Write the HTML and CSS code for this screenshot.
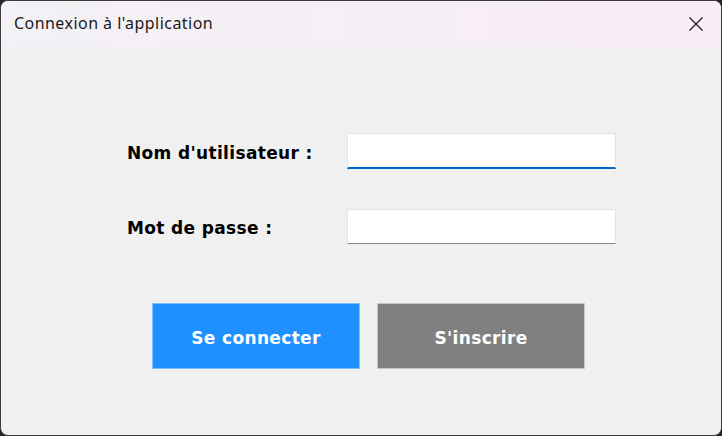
FILE: index.html
```html
<!DOCTYPE html>
<html lang="fr">
<head>
<meta charset="utf-8">
<title>Connexion à l'application</title>
<link rel="stylesheet" href="styles.css">
</head>
<body>
<div class="window">
  <div class="titlebar">
    <span class="title">Connexion à l'application</span>
    <button class="close" aria-label="Fermer">
      <svg width="16" height="16" viewBox="0 0 16 16"><path d="M1.5 1.5 L14.5 14.5 M14.5 1.5 L1.5 14.5" stroke="#1a1a1a" stroke-width="1.2" fill="none"/></svg>
    </button>
  </div>
  <div class="content">
    <div class="form">
      <label class="label" for="user">Nom d'utilisateur :</label>
      <div class="field focused"><input id="user" type="text"></div>
      <label class="label" for="pass">Mot de passe :</label>
      <div class="field"><input id="pass" type="password"></div>
    </div>
    <div class="buttons">
      <button class="btn primary">Se connecter</button>
      <button class="btn secondary">S'inscrire</button>
    </div>
  </div>
</div>
</body>
</html>
```

FILE: styles.css
```css
html, body {
  margin: 0;
  padding: 0;
  background: #262626;
  width: 722px;
  height: 436px;
  overflow: hidden;
}
.window {
  box-sizing: border-box;
  width: 722px;
  height: 436px;
  border-radius: 8px;
  border: 1px solid #3c3c3c;
  background: #f0f0f0;
  overflow: hidden;
  display: flex;
  flex-direction: column;
}
.titlebar {
  height: 46px;
  flex: none;
  display: flex;
  align-items: center;
  justify-content: space-between;
  background: linear-gradient(to right, #f3f1f5, #f9ecf6);
  padding-left: 13px;
}
.title {
  font-family: "Noto Sans", sans-serif;
  font-size: 16px;
  letter-spacing: 0.45px;
  color: #1a1a1a;
  margin-top: -2px;
}
.close {
  width: 46px;
  height: 46px;
  border: none;
  background: transparent;
  display: flex;
  align-items: center;
  justify-content: center;
  padding: 0;
  margin-right: 2px;
}
.content {
  flex: 1;
  display: flex;
  flex-direction: column;
}
.form {
  margin-top: 86px;
  margin-left: 126px;
  display: grid;
  grid-template-columns: 220px 269px;
  row-gap: 40px;
  align-items: center;
}
.label {
  font-family: "DejaVu Sans", sans-serif;
  font-weight: bold;
  font-size: 17px;
  color: #000;
  letter-spacing: 0.35px;
  padding-top: 3px;
}
.field {
  box-sizing: border-box;
  height: 35px;
  background: #fff;
  border: 1px solid #e4e4e4;
  border-bottom: 1px solid #8a8a8a;
}
.field.focused {
  border-bottom: 2px solid #0067c0;
  height: 36px;
}
.field input {
  border: none;
  outline: none;
  background: transparent;
  width: 100%;
  height: 100%;
  padding: 0 8px;
  box-sizing: border-box;
  font-family: "Noto Sans", sans-serif;
  font-size: 14px;
}
.buttons {
  margin-top: 59px;
  margin-left: 151px;
  display: flex;
  gap: 17px;
}
.btn {
  width: 208px;
  height: 66px;
  font-family: "DejaVu Sans", sans-serif;
  font-weight: bold;
  font-size: 17px;
  color: #fff;
  letter-spacing: 0.35px;
  cursor: pointer;
  padding: 3px 0 0 0;
}
.primary {
  background: #1e90ff;
  border: 1px solid #7cc0ff;
}
.secondary {
  background: #808080;
  border: 1px solid #c8c8c8;
}
```
